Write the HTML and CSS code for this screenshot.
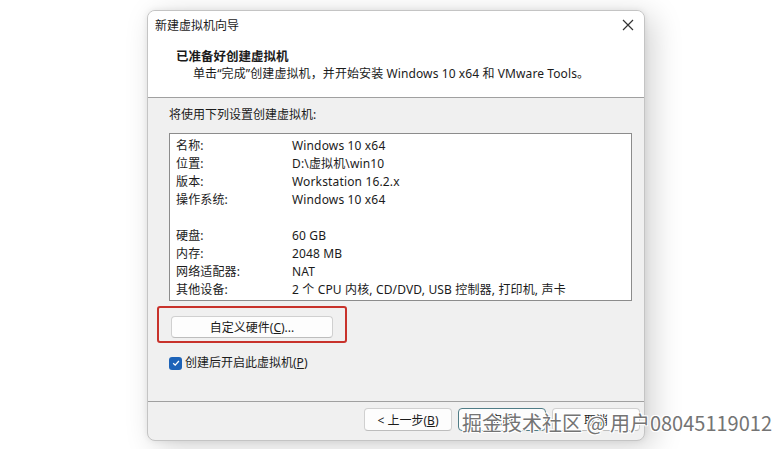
FILE: index.html
```html
<!DOCTYPE html>
<html lang="zh-CN">
<head>
<meta charset="utf-8">
<title>新建虚拟机向导</title>
<link rel="stylesheet" href="styles.css">
</head>
<body>
<div class="desktop">
  <div class="dialog">
    <div class="titlebar">
      <span class="title">新建虚拟机向导</span>
      <svg class="close" width="12" height="12" viewBox="0 0 12 12"><path d="M1 1L11 11M11 1L1 11" stroke="#333" stroke-width="1.2" fill="none"/></svg>
    </div>
    <div class="header">
      <div class="heading">已准备好创建虚拟机</div>
      <div class="subtitle">单击“完成”创建虚拟机，并开始安装 Windows 10 x64 和 VMware Tools。</div>
    </div>
    <div class="body">
      <div class="intro">将使用下列设置创建虚拟机:</div>
      <div class="listbox">
        <div class="row"><span class="key">名称:</span><span>Windows 10 x64</span></div>
        <div class="row"><span class="key">位置:</span><span>D:\虚拟机\win10</span></div>
        <div class="row"><span class="key">版本:</span><span>Workstation 16.2.x</span></div>
        <div class="row"><span class="key">操作系统:</span><span>Windows 10 x64</span></div>
        <div class="row"></div>
        <div class="row"><span class="key">硬盘:</span><span>60 GB</span></div>
        <div class="row"><span class="key">内存:</span><span>2048 MB</span></div>
        <div class="row"><span class="key">网络适配器:</span><span>NAT</span></div>
        <div class="row"><span class="key">其他设备:</span><span>2 个 CPU 内核, CD/DVD, USB 控制器, 打印机, 声卡</span></div>
      </div>
      <div class="highlight">
        <button class="btn custom">自定义硬件(<u>C</u>)...</button>
      </div>
      <label class="check">
        <span class="box"><svg width="10" height="10" viewBox="0 0 10 10"><path d="M2.2 5.2L4.2 7.1L7.9 3" stroke="#fff" stroke-width="1.3" fill="none"/></svg></span>
        <span>创建后开启此虚拟机(<u>P</u>)</span>
      </label>
    </div>
    <div class="footer">
      <button class="btn">&lt; 上一步(<u>B</u>)</button>
      <button class="btn primary">完成</button>
      <button class="btn">取消</button>
    </div>
  </div>
  <div class="watermark">掘金技术社区 @ 用户08045119012</div>
</div>
</body>
</html>
```
FILE: styles.css
```css
* { box-sizing: border-box; }

body {
  margin: 0;
  background: #ffffff;
  font-family: "Noto Sans", "Noto Sans CJK SC", sans-serif;
  font-size: 12px;
  color: #1b1b1b;
}

.desktop {
  position: relative;
  width: 783px;
  height: 449px;
  overflow: hidden;
  padding: 10px 0 0 147px;
}

.dialog {
  width: 498px;
  height: 431px;
  border: 1px solid #c4c4c4;
  border-radius: 8px;
  overflow: hidden;
  background: #f0f0f0;
  display: flex;
  flex-direction: column;
  box-shadow: 8px 6px 30px rgba(0, 0, 0, 0.18), 0 0 6px rgba(0, 0, 0, 0.08);
}

.titlebar {
  height: 28px;
  background: #ffffff;
  display: flex;
  align-items: center;
  justify-content: space-between;
  padding: 0 10px 0 7px;
  flex: none;
}

.title { font-size: 12px; }

.header {
  background: #ffffff;
  height: 59px;
  padding: 9px 0 0 28px;
  border-bottom: 1px solid #a0a0a0;
  flex: none;
}

.heading {
  font-weight: bold;
  font-size: 12.5px;
  line-height: 18px;
}

.subtitle {
  line-height: 16px;
  padding-left: 17px;
  letter-spacing: 0.1px;
}

.body {
  flex: 1;
  padding: 8px 12px 0 21px;
  display: flex;
  flex-direction: column;
  border-bottom: 1px solid #a0a0a0;
}

.intro { line-height: 18px; }

.listbox {
  margin-top: 9px;
  height: 168px;
  background: #ffffff;
  border: 1px solid #8c8c8c;
  padding: 3px 0 0 6px;
  letter-spacing: 0.15px;
}

.row {
  display: flex;
  height: 18px;
  line-height: 18px;
}

.key { width: 116px; flex: none; }

.highlight {
  margin: 5px 0 0 -12px;
  width: 190px;
  height: 37px;
  border: 2px solid #c8322b;
  border-radius: 3px;
  padding: 8px 0 0 12px;
}

.btn {
  font-family: inherit;
  font-size: 12px;
  color: #1b1b1b;
  background: #fdfdfd;
  border: 1px solid #d0d0d0;
  border-bottom-color: #bdbdbd;
  border-radius: 4px;
  height: 23px;
  width: 88px;
  padding: 0;
}

.btn.custom { width: 162px; height: 22px; }

.btn.primary { border: 1px solid #4f7c86; }

.check {
  display: flex;
  align-items: center;
  gap: 3px;
  margin-top: 12px;
  line-height: 16px;
}

.box {
  width: 13px;
  height: 13px;
  border-radius: 3px;
  background: #1d63b8;
  display: flex;
  align-items: center;
  justify-content: center;
}

.footer {
  flex: none;
  height: 38px;
  display: flex;
  justify-content: flex-end;
  align-items: center;
  gap: 6px;
  padding: 0 4px 3px 0;
}

.watermark {
  position: absolute;
  left: 462px;
  top: 410px;
  font-family: "Noto Sans CJK SC", sans-serif;
  font-size: 20px;
  line-height: 26px;
  color: #747474;
  white-space: nowrap;
  text-shadow: 0 0 1px #fff, 1px 1px 0 #fff, -1px -1px 0 #fff, 1px -1px 0 #fff, -1px 1px 0 #fff;
}
```
